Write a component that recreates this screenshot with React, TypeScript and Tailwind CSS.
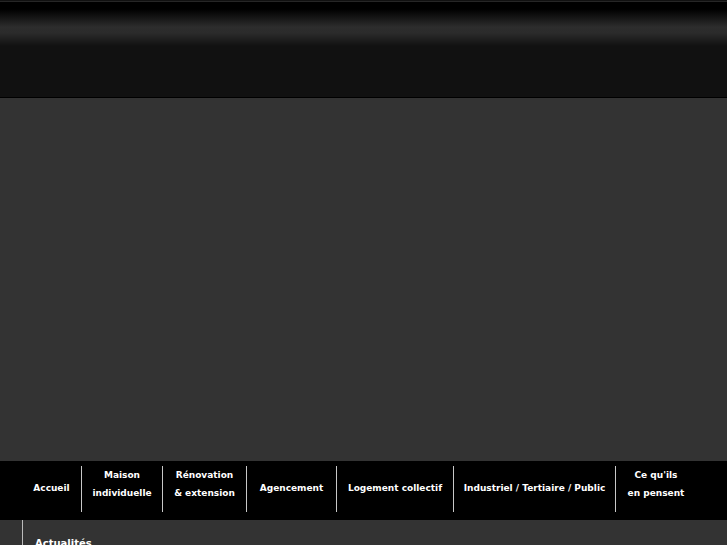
import React from "react";

const items: { lines: string[]; w: string }[] = [
  { lines: ["Accueil"], w: "w-[60px]" },
  { lines: ["Maison", "individuelle"], w: "w-[81px]" },
  { lines: ["Rénovation", "& extension"], w: "w-[84px]" },
  { lines: ["Agencement"], w: "w-[90px]" },
  { lines: ["Logement collectif"], w: "w-[117px]" },
  { lines: ["Industriel / Tertiaire / Public"], w: "w-[162px]" },
  { lines: ["Ce qu'ils", "en pensent"], w: "w-[80px]" },
];

export default function App() {
  return (
    <div
      className="min-h-screen bg-[#333333] text-white"
      style={{ fontFamily: '"DejaVu Sans", Verdana, sans-serif' }}
    >
      {/* header band */}
      <header className="h-[98px] border-b border-black bg-[linear-gradient(to_bottom,#111_0px,#111_1px,#262626_1px,#262626_2px,#000_2px,#000_9px,#2d2d2d_27px,#2b2b2b_33px,#111_46px,#111_100%)]" />

      {/* banner area */}
      <div className="h-[363px]" />

      {/* main menu */}
      <nav className="h-[59px] bg-black pt-[5px]">
        <ul className="flex pl-[22px]">
          {items.map((it, i) => (
            <li
              key={i}
              className={
                "flex h-[46px] flex-col items-center text-center text-[9px] font-bold leading-[18px] " +
                it.w +
                (it.lines.length === 1 ? " pt-[13px]" : " pt-0") +
                (i < items.length - 1 ? " border-r border-[#c8c8c8]" : "")
              }
            >
              {it.lines.map((l) => (
                <span key={l} className="whitespace-nowrap">
                  {l}
                </span>
              ))}
            </li>
          ))}
        </ul>
      </nav>

      {/* content */}
      <div className="pl-[22px]">
        <div className="min-h-[200px] border-l border-[#bbbbbb] pl-[12px] pt-[16px]">
          <h2 className="text-[10px] font-bold">Actualités</h2>
        </div>
      </div>
    </div>
  );
}
